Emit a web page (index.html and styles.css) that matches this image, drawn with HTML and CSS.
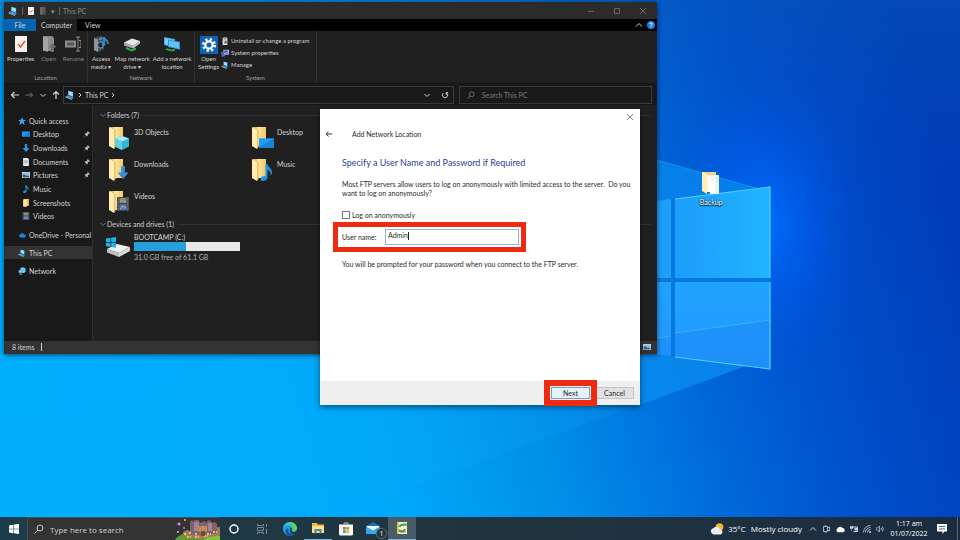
FILE: index.html
```html
<!DOCTYPE html>
<html lang="en">
<head>
  <meta charset="UTF-8">
  <meta name="viewport" content="width=device-width, initial-scale=1.0">
  <title>This PC</title>
  <link rel="stylesheet" href="styles.css">
</head>
<body>

<!-- icon sprite -->
<svg class="sprite" aria-hidden="true">
  <defs>
    <linearGradient id="gFolder" x1="0" y1="0" x2="1" y2="0"><stop offset="0" stop-color="#ffe9a6"/><stop offset="1" stop-color="#f2c968"/></linearGradient>
    <linearGradient id="gEdge" x1="0" y1="0" x2="1" y2="1"><stop offset="0" stop-color="#2fb7e6"/><stop offset="1" stop-color="#1264b8"/></linearGradient>
    <linearGradient id="gEdge2" x1="0" y1="0" x2="1" y2="0"><stop offset="0" stop-color="#2ab4e8"/><stop offset="1" stop-color="#67d85a"/></linearGradient>

    <symbol id="pc" viewBox="0 0 16 16"><path d="M5 1l8 2v8l-8-3z" fill="#5ab9ee"/><path d="M6 2.500l6 1.500v5.500l-6-2.200z" fill="#a6dcf8"/><path d="M1 10l4-1.500 9 3.500-3 3z" fill="#3d93cc"/><path d="M1 10v1.500l10 4.500v-1z" fill="#c9dbe6"/></symbol>
    <symbol id="sheet" viewBox="0 0 16 16"><path d="M2 0h12v16H2z" fill="#f4f2f1"/><path d="M5 8l2.500 3L12 5" fill="none" stroke="#d9623b" stroke-width="1.600"/></symbol>
    <symbol id="open" viewBox="0 0 16 16"><path d="M2 0h9l2 2v13H2z" fill="#8b8b8b"/><path d="M2 0l5 2v14l-5-2z" fill="#a4a4a4"/><path d="M11.500 7l4 4.500h-2.500V16h-3v-4.500H7.500z" fill="#6d6d6d"/></symbol>
    <symbol id="rename" viewBox="0 0 16 16"><path d="M0 4.500h11v7H0z" fill="#8d8d8d"/><path d="M2 6.500h7v3H2z" fill="#555"/><path d="M11 1h4M13 1v14M11 15h4M14 4.500h2v7h-2" fill="none" stroke="#8d8d8d"/></symbol>
    <symbol id="media" viewBox="0 0 16 16"><path d="M1 2l7-2 3 1v12l-6 3-4-2z" fill="#46525f"/><path d="M1 2l4 1.500V16l-4-2z" fill="#8796a5"/><circle cx="7.500" cy="9" r="3" fill="#1d2733" stroke="#9db2c6" stroke-width=".8"/><path d="M11 1v7M11 2c1 2 4 2 4 6" fill="none" stroke="#2c8bd0" stroke-width="2"/><circle cx="10.500" cy="8.500" r="1.800" fill="#2c8bd0"/><path d="M6 3.500l3-1" stroke="#9db2c6"/></symbol>
    <symbol id="netdrive" viewBox="0 0 16 16"><path d="M0 6.500l8-4 8 2.500-7 5z" fill="#e6e8e8"/><path d="M0 6.500v3l9 3v-2.500z" fill="#a9adad"/><path d="M9 10l7-5v2.500l-7 5z" fill="#c4c8c8"/><path d="M2 12l6 2.500 4-2" fill="none" stroke="#35ad45" stroke-width="2"/></symbol>
    <symbol id="netloc" viewBox="0 0 16 16"><path d="M0 1l11 2v9L0 9z" fill="#3ea4dd"/><path d="M1 2.200l9 1.800v6.500L1 8z" fill="#7cd0f4"/><path d="M4 3.500l12 2.200v8L4 11z" fill="#3097d6"/><path d="M5 4.800l10 1.800v5.900L5 10z" fill="#63c3ef"/><path d="M2 13l6 1.500 3-1" fill="none" stroke="#35ad45" stroke-width="1.800"/></symbol>
    <symbol id="gear" viewBox="0 0 18 18"><path d="M0 0h18v18H0z" fill="#0e63b4"/><circle cx="9" cy="9" r="5.500" fill="none" stroke="#fff" stroke-width="3" stroke-dasharray="2.160 2.160"/><circle cx="9" cy="9" r="3.600" fill="none" stroke="#fff" stroke-width="2.200"/></symbol>
    <symbol id="box" viewBox="0 0 10 10"><path d="M2 1h6v9H2z" fill="#e1e1e1"/><path d="M3 0h4v3H3z" fill="#8f8f8f"/><circle cx="6" cy="6.500" r="2" fill="#767676"/></symbol>
    <symbol id="sysprop" viewBox="0 0 10 10"><path d="M3 1h7v6H3z" fill="#b9cdf3"/><path d="M4 2h5v4H4z" fill="#344bb3"/><path d="M0 4l4-1 1 6-4 1z" fill="#5d62c6"/><path d="M4 5l1.500 1.500L8.500 3" fill="none" stroke="#fff"/></symbol>

    <symbol id="star" viewBox="0 0 10 10"><path d="M5 0l1.300 3.300L10 3.700 7.200 6 8.200 10 5 7.800 1.800 10l1-4L0 3.700l3.700-.4z" fill="#3aa7f0"/></symbol>
    <symbol id="desk" viewBox="0 0 16 12"><path d="M0 1h16v10H0z" fill="#1f9df2"/><path d="M0 11L16 1v10z" fill="#1583d8"/></symbol>
    <symbol id="down" viewBox="0 0 12 14"><path d="M4 0h4v7h4l-6 7-6-7h4z" fill="#3a8fdc"/></symbol>
    <symbol id="doc" viewBox="0 0 12 14"><path d="M1 0h8l2 2v12H1z" fill="#e8f0f6"/><path d="M3 4h6M3 6h6M3 8h6M3 10h4" stroke="#7893aa"/></symbol>
    <symbol id="pic" viewBox="0 0 16 12"><path d="M0 0h16v12H0z" fill="#dfeaf4"/><path d="M1 1h14v5H1z" fill="#8bbce4"/><path d="M1 6c4-3 5 2 14 1v4H1z" fill="#365e82"/></symbol>
    <symbol id="note" viewBox="0 0 12 16"><path d="M5 0h2c0 3 5 4 4 9-.3 1-1 2-1.500 2 .8-3-.5-4.500-2.500-5.500V12.500C7 15 4.500 16 2.500 16 .5 16 0 14.500.5 13.300 1 12 3 11 5 11.300z" fill="#1e95e0"/></symbol>
    <symbol id="folderSm" viewBox="0 0 12 14"><path d="M2 0h9v12H2z" fill="#f5cf72"/><path d="M1 1l6 1v12l-6-1z" fill="#ffe6a0"/></symbol>
    <symbol id="film" viewBox="0 0 12 14"><path d="M0 0h12v14H0z" fill="#3d4450"/><path d="M1.200 0v14M10.800 0v14" stroke="#8a93a0" stroke-width="1" stroke-dasharray="1.200 1"/><path d="M2.500 1h7v5h-7z" fill="#7e8a76"/><path d="M2.500 7.500h7V13h-7z" fill="#4f7bd0"/><path d="M3 5l2.500-2L9 5.500M3 12l3-3 3 2" fill="none" stroke="#d9a060"/></symbol>
    <symbol id="cloud" viewBox="0 0 16 10"><path d="M4 10a3.500 3.500 0 0 1 0-6 4.500 4.500 0 0 1 8-.500A3.300 3.300 0 0 1 13 10z" fill="currentColor"/></symbol>
    <symbol id="net" viewBox="0 0 14 14"><circle cx="8.500" cy="5.500" r="5" fill="#58b4ea"/><path d="M5 3c3-2 4 1 7 0M4 7c4-2 5 2 9 0" stroke="#cfeaf9" fill="none"/><path d="M1 5l6 2v5L1 10z" fill="#2f8ed0"/><path d="M2 6l4 1.400v3L2 9z" fill="#a6dcf8"/><path d="M2 12l5 1.500" stroke="#c9dbe6"/></symbol>
    <symbol id="pin" viewBox="0 0 8 8"><path d="M5 0l3 3-1 .6-.7-.2L5 4.800 5 6.500 4 7 2.500 5.500.5 8 0 7.500 2.500 5.500 1 4l.5-1h1.700L4.600 1.700 4.400 1z" fill="#b8c2ca"/></symbol>

    <symbol id="folder" viewBox="0 0 20 24"><path d="M1 1h13v18H6z" fill="#e9ba55"/><path d="M5 1h9v19H5z" fill="url(#gFolder)"/><path d="M0 1l5 2.500V23l-5-3z" fill="#ffedb4"/><path d="M5 3l1.500 1v17L5 23z" fill="#eac36b"/></symbol>
    <symbol id="cube" viewBox="0 0 14 14"><path d="M7 0l7 2.500v8L7 14 0 10.500v-8z" fill="#36b5d3"/><path d="M7 0l7 2.500L7 5.500 0 2.500z" fill="#a5eaf4"/><path d="M0 2.500l7 3V14l-7-3.500z" fill="#5fd0e4"/></symbol>
    <symbol id="drive" viewBox="0 0 24 20"><path d="M1 12l10-5 13 3-11 6z" fill="#f1f1f1"/><path d="M1 12l12 4v4L1 15.500z" fill="#bfbfbf"/><path d="M13 16l11-6v4l-11 6z" fill="#dadada"/><path d="M0 1.500l4.500-.700V5H0zM5.200.700L10 0v5H5.200zM0 5.700h4.500V10L0 9.300zM5.200 5.700H10v5l-4.800-.700z" fill="#1fb4ea"/></symbol>

    <symbol id="chevD" viewBox="0 0 8 8"><path d="M1.500 3L4 5.500 6.500 3" fill="none" stroke="currentColor"/></symbol>
    <symbol id="chevU" viewBox="0 0 8 8"><path d="M1 5.500l3-3 3 3" fill="none" stroke="currentColor"/></symbol>
    <symbol id="chevR" viewBox="0 0 8 8"><path d="M3 2l2 2-2 2" fill="none" stroke="currentColor"/></symbol>
    <symbol id="arrL" viewBox="0 0 10 10"><path d="M9 5H1.500M4.500 2l-3 3 3 3" fill="none" stroke="currentColor" stroke-width="1.200"/></symbol>
    <symbol id="arrR" viewBox="0 0 10 10"><path d="M1.500 5h7M6 2.500L8.500 5 6 7.500" fill="none" stroke="currentColor"/></symbol>
    <symbol id="arrU" viewBox="0 0 10 10"><path d="M5 9V1.500M2 4.500l3-3 3 3" fill="none" stroke="currentColor" stroke-width="1.200"/></symbol>
    <symbol id="reload" viewBox="0 0 10 10"><path d="M3 2.500a3.300 3.300 0 1 0 4 0M6.500 5V2H9" fill="none" stroke="currentColor" stroke-width="1.200"/></symbol>
    <symbol id="lens" viewBox="0 0 10 10"><circle cx="6" cy="4" r="3" fill="none" stroke="currentColor"/><path d="M4 6L.5 9.500" stroke="currentColor"/></symbol>
    <symbol id="cross" viewBox="0 0 8 8"><path d="M1 1l6 6M7 1L1 7" stroke="currentColor"/></symbol>
    <symbol id="win" viewBox="0 0 10 10"><path d="M0 1.400L4.500.700v4H0zM5.100.600L10 0v4.700H5.100zM0 5.300h4.500v4L0 8.600zM5.100 5.300H10V10l-4.900-.700z" fill="#fff"/></symbol>
  </defs>
</svg>

<main class="desktop">
  <svg class="wallpaper" viewBox="0 0 960 540" preserveAspectRatio="none" aria-hidden="true">
    <defs>
      <linearGradient id="sky" x1="0" y1=".55" x2="1" y2=".4">
        <stop offset="0" stop-color="#00aefe"/><stop offset=".35" stop-color="#00a8fa"/><stop offset=".52" stop-color="#008ee8"/>
        <stop offset=".68" stop-color="#006ada"/><stop offset=".82" stop-color="#0050cc"/><stop offset="1" stop-color="#003cb6"/>
      </linearGradient>
      <linearGradient id="topShade" x1="0" y1="0" x2="0" y2="1"><stop offset="0" stop-color="#0a58b4" stop-opacity=".4"/><stop offset=".35" stop-color="#0650c0" stop-opacity="0"/></linearGradient>
      <radialGradient id="glow"><stop offset="0" stop-color="#0070ff" stop-opacity=".9"/><stop offset=".5" stop-color="#0060f8" stop-opacity=".4"/><stop offset="1" stop-color="#0050e0" stop-opacity="0"/></radialGradient>
      <linearGradient id="beam" x1="0" y1="0" x2="1" y2="0"><stop offset="0" stop-color="#12b4ff" stop-opacity=".1"/><stop offset="1" stop-color="#10a0f8" stop-opacity=".22"/></linearGradient>
      <linearGradient id="pane" x1="0" y1="0" x2="1" y2="0"><stop offset="0" stop-color="#1c9dfb"/><stop offset="1" stop-color="#22b4ff"/></linearGradient>
      <linearGradient id="pane2" x1="0" y1="0" x2="0" y2="1"><stop offset="0" stop-color="#1fa3ff"/><stop offset="1" stop-color="#2496ff"/></linearGradient>
    </defs>
    <path d="M0 0h960v540H0z" fill="url(#sky)"/>
    <path d="M0 0h960v540H0z" fill="url(#topShade)"/>
    <ellipse cx="765" cy="225" rx="105" ry="160" fill="url(#glow)"/>
    <path d="M0 425L540 270 770 357 320 520 0 540z" fill="url(#beam)"/>
    <path d="M640 155L770 192v165L640 405z" fill="#0a8cf0" opacity=".7"/>
    <path d="M657 160L770 192" stroke="#27a4f6" opacity=".5"/>
    <path d="M640 203L671 199v79h-31z" fill="#1d9ffa"/>
    <path d="M675 199L770 187v91h-95z" fill="url(#pane)"/>
    <path d="M640 278h130v4H640zM671 199h4v158h-4z" fill="#0878e0"/>
    <path d="M640 282h31v74l-31-4zM675 282h95v87l-95-12z" fill="url(#pane2)"/>
    <path d="M640 341l31-5v20l-31-4zM675 333l95-13v49l-95-12z" fill="#1a84f2" opacity=".4"/>
    <path d="M657 338l14-2M675 333l95-13" stroke="#45bdff" opacity=".7"/>
    <path d="M675 199l95-12v91M770 282v87l-95-12" fill="none" stroke="#4fd2ff" stroke-width="1.200"/>
  </svg>

  <a class="shortcut" href="#backup">
    <svg viewBox="0 0 20 24"><path d="M1 1h14v19H1z" fill="#f0d48b"/><path d="M1 1l5 2v20l-5-3z" fill="#ffeebb"/><path d="M6 4h8v17H6z" fill="#fff6e0"/><path d="M9 4h9v19H9z" fill="#f4f4f2"/><path d="M8 6l6 2v15l-6-3z" fill="#fff"/><path d="M10 8l2 1M15 7h2M15 10h2" stroke="#c7cdd3"/></svg>
    <span>Backup</span>
  </a>

  <section class="explorer" aria-label="This PC">
    <header class="titlebar">
      <svg class="i10"><use href="#pc"/></svg>
      <span class="sep"></span>
      <svg class="i8"><use href="#sheet"/></svg>
      <svg class="i8 dim"><use href="#open"/></svg>
      <span class="tri">▾</span>
      <span class="sep"></span>
      <span class="title">This PC</span>
      <div class="winbuttons">
        <button type="button" aria-label="Minimize"><svg class="i8" viewBox="0 0 8 8"><path d="M1 4.500h6" stroke="currentColor"/></svg></button>
        <button type="button" aria-label="Maximize"><svg class="i8" viewBox="0 0 8 8"><path d="M1.500 1.500h5v5h-5z" fill="none" stroke="currentColor"/></svg></button>
        <button type="button" aria-label="Close"><svg class="i8"><use href="#cross"/></svg></button>
      </div>
    </header>

    <nav class="tabs">
      <button type="button" class="tab file">File</button>
      <button type="button" class="tab active">Computer</button>
      <button type="button" class="tab">View</button>
      <svg class="i8 collapse"><use href="#chevU"/></svg>
      <svg class="i8" viewBox="0 0 10 10"><circle cx="5" cy="5" r="5" fill="#1b80dc"/><path d="M3.500 3.700c0-2 3-2 3 0 0 1.200-1.500 1.200-1.500 2.300M5 7v1.200" fill="none" stroke="#fff" stroke-width="1.200"/></svg>
    </nav>

    <div class="ribbon">
      <div class="group location">
        <div class="tools">
          <button type="button"><svg class="i16"><use href="#sheet"/></svg>Properties</button>
          <button type="button" class="off"><svg class="i16"><use href="#open"/></svg>Open</button>
          <button type="button" class="off"><svg class="i16"><use href="#rename"/></svg>Rename</button>
        </div>
        <p>Location</p>
      </div>
      <div class="group network">
        <div class="tools">
          <button type="button"><svg class="i16"><use href="#media"/></svg>Access<br>media ▾</button>
          <button type="button"><svg class="i16"><use href="#netdrive"/></svg>Map network<br>drive ▾</button>
          <button type="button"><svg class="i16"><use href="#netloc"/></svg>Add a network<br>location</button>
        </div>
        <p>Network</p>
      </div>
      <div class="group system">
        <div class="tools">
          <button type="button" class="settings"><svg class="i18"><use href="#gear"/></svg>Open<br>Settings</button>
          <div class="small-tools">
            <button type="button"><svg class="i8"><use href="#box"/></svg>Uninstall or change a program</button>
            <button type="button"><svg class="i8"><use href="#sysprop"/></svg>System properties</button>
            <button type="button"><svg class="i8"><use href="#pc"/></svg>Manage</button>
          </div>
        </div>
        <p>System</p>
      </div>
    </div>

    <div class="addressrow">
      <div class="history">
        <svg class="i10"><use href="#arrL"/></svg>
        <svg class="i10 dim"><use href="#arrR"/></svg>
        <svg class="i8"><use href="#chevD"/></svg>
        <svg class="i10"><use href="#arrU"/></svg>
      </div>
      <div class="address">
        <svg class="i10"><use href="#pc"/></svg>
        <svg class="i8"><use href="#chevR"/></svg>
        <a href="#thispc">This PC</a>
        <svg class="i8"><use href="#chevR"/></svg>
        <svg class="i8 push"><use href="#chevD"/></svg>
        <svg class="i8"><use href="#reload"/></svg>
      </div>
      <label class="find">
        <svg class="i8"><use href="#lens"/></svg>
        <input type="text" placeholder="Search This PC" aria-label="Search This PC">
      </label>
    </div>

    <div class="body">
      <nav class="sidebar">
        <ul class="quick">
          <li class="root"><a href="#q"><svg class="i8"><use href="#star"/></svg>Quick access</a></li>
          <li><a href="#q"><svg class="i8"><use href="#desk"/></svg>Desktop<svg class="pin"><use href="#pin"/></svg></a></li>
          <li><a href="#q"><svg class="i8"><use href="#down"/></svg>Downloads<svg class="pin"><use href="#pin"/></svg></a></li>
          <li><a href="#q"><svg class="i8"><use href="#doc"/></svg>Documents<svg class="pin"><use href="#pin"/></svg></a></li>
          <li><a href="#q"><svg class="i8"><use href="#pic"/></svg>Pictures<svg class="pin"><use href="#pin"/></svg></a></li>
          <li><a href="#q"><svg class="i8"><use href="#note"/></svg>Music</a></li>
          <li><a href="#q"><svg class="i8"><use href="#folderSm"/></svg>Screenshots</a></li>
          <li><a href="#q"><svg class="i8"><use href="#film"/></svg>Videos</a></li>
        </ul>
        <ul class="places">
          <li><a href="#od"><svg class="i8 blue"><use href="#cloud"/></svg>OneDrive - Personal</a></li>
          <li class="current"><a href="#pc1"><svg class="i8"><use href="#pc"/></svg>This PC</a></li>
          <li><a href="#net1"><svg class="i8"><use href="#net"/></svg>Network</a></li>
        </ul>
      </nav>

      <div class="content">
        <h2><svg class="i8"><use href="#chevD"/></svg>Folders (7)</h2>
        <div class="folders">
          <a href="#f"><svg viewBox="0 0 22 24"><use href="#folder" width="20" height="24"/><use href="#cube" x="6" y="10" width="14" height="14"/></svg>3D Objects</a>
          <a href="#f"><svg viewBox="0 0 22 24"><use href="#folder" width="20" height="24"/><use href="#desk" x="7" y="11" width="15" height="12"/></svg>Desktop</a>
          <a href="#f"><svg viewBox="0 0 22 24"><use href="#folder" width="20" height="24"/><use href="#down" x="8" y="8" width="12" height="13"/></svg>Downloads</a>
          <a href="#f"><svg viewBox="0 0 22 24"><use href="#folder" width="20" height="24"/><use href="#note" x="8" y="6" width="13" height="17"/></svg>Music</a>
          <a href="#f"><svg viewBox="0 0 22 24"><use href="#folder" width="20" height="24"/><use href="#film" x="8" y="7" width="12" height="14"/></svg>Videos</a>
        </div>
        <h2><svg class="i8"><use href="#chevD"/></svg>Devices and drives (1)</h2>
        <div class="drive">
          <svg class="driveicon"><use href="#drive"/></svg>
          <div class="driveinfo">
            <span>BOOTCAMP (C:)</span>
            <div class="usage"><div class="used" style="width:49%"></div></div>
            <span class="free">31.0 GB free of 61.1 GB</span>
          </div>
        </div>
      </div>
    </div>

    <footer class="status">
      <span>8 items</span>
      <svg class="view"><use href="#pic"/></svg>
    </footer>
  </section>

  <form class="dialog" aria-label="Add Network Location">
    <div class="dialog-top">
      <button type="button" class="close" aria-label="Close"><svg class="i8"><use href="#cross"/></svg></button>
    </div>
    <div class="dialog-title">
      <button type="button" class="back" aria-label="Back"><svg class="i8"><use href="#arrL"/></svg></button>
      <span>Add Network Location</span>
    </div>
    <div class="dialog-body">
      <h1>Specify a User Name and Password if Required</h1>
      <p>Most FTP servers allow users to log on anonymously with limited access to the server.&nbsp; Do you want to log on anonymously?</p>
      <div class="check">
        <input type="checkbox" id="anon">
        <label for="anon">Log on anonymously</label>
      </div>
      <div class="userrow">
        <label for="user">User name:</label>
        <input type="text" id="user" value="Admin">
      </div>
      <p>You will be prompted for your password when you connect to the FTP server.</p>
    </div>
    <div class="dialog-foot">
      <button type="button" class="next">Next</button>
      <button type="button">Cancel</button>
    </div>
  </form>
</main>

<footer class="taskbar">
  <button type="button" class="start" aria-label="Start"><svg class="i10"><use href="#win"/></svg></button>
  <label class="search">
    <svg class="i10"><use href="#lens"/></svg>
    <input type="text" placeholder="Type here to search" aria-label="Type here to search">
    <svg class="castle" viewBox="0 0 45 22" aria-hidden="true">
      <path d="M0 22c3-6 12-8 20-6s18 0 25 0v6z" fill="#5f9c35"/>
      <path d="M8 14l4-2 3 1 6-3 24-1v9l-20 3-17-3z" fill="#a87c52"/>
      <path d="M15 12V4l2-2 2 2v-2h5l1 3 4-2 3 2V3l3-1 2 3 3-1 2 2v10l-27 1z" fill="#7c6272"/>
      <path d="M19 4h5v9h-5zM33 5h4v8h-4z" fill="#a4848a"/>
      <path d="M9 16h3M14 15h3M20 16h3M26 15h3M32 16h4M38 14h4M12 19h4M20 19h4M29 18h4" stroke="#e9bd78" stroke-width="2" stroke-dasharray="2 1"/>
      <path d="M24 8h8v6h-8z" fill="#c58a54"/>
      <path d="M26 13h4v5h-4z" fill="#704a3d"/>
      <path d="M28 22c4-3 10-4 17-4v4z" fill="#82c63e"/>
      <path d="M2 6l2-2 2 2-2 2z" fill="#c67be8"/><circle cx="10" cy="2" r="1" fill="#f2ce3c"/><circle cx="3" cy="14" r="1" fill="#b7cbe6"/><circle cx="9" cy="10" r="1" fill="#c67be8"/>
    </svg>
  </label>
  <nav class="apps">
    <button type="button" aria-label="Cortana"><svg class="i14" viewBox="0 0 14 14"><circle cx="7" cy="7" r="4" fill="none" stroke="#fff" stroke-width="1.500"/></svg></button>
    <button type="button" aria-label="Task View"><svg class="i14" viewBox="0 0 14 14"><path d="M2.500 2v1.500h6V2M2.500 12v-1.500h6V12M2.500 5.500h6v3h-6zM11.500 2v3M11.500 7v5" fill="none" stroke="#8696a0" stroke-width=".9"/></svg></button>
    <button type="button" aria-label="Edge"><svg class="i14" viewBox="0 0 14 14"><circle cx="7" cy="7" r="7" fill="url(#gEdge)"/><path d="M0 6.500C.5 2.500 3.500 0 7 0c4 0 7 3 7 6 0 2-1.500 3.500-3.500 3.500-1.500 0-2-.500-2-1 0-.800.800-1 .8-2.300C9.300 4.500 7.500 3.500 5.300 3.500 2.800 3.500.8 5 0 6.500z" fill="url(#gEdge2)"/><path d="M5 6c-1 3 .5 6.500 5 6.500 1.200 0 2-.3 2.800-.8C10.500 14.500 4.500 14.500 3 10.500 2.300 8.500 3.500 6.700 5 6z" fill="#0e4f9b"/><path d="M8.500 8.500c0 .8 1 1.500 2.500 1.500 1 0 2-.300 3-1.500-.2 1.500-.8 2.500-1.700 3.300-3 .8-5.800-.8-5.300-4.300.2-.8.800-1.500 1.500-1.500.6.600.4 1.500 0 2.500z" fill="#203640"/></svg></button>
    <button type="button" class="running" aria-label="File Explorer"><svg class="i14" viewBox="0 0 14 14"><path d="M1 2h5l1 1.500h6V12H1z" fill="#e9b949"/><path d="M1 5h12v7H1z" fill="#ffdf83"/><path d="M3.500 8h7v4.500h-2V10h-3v2.500h-2z" fill="#4b83ad"/></svg></button>
    <button type="button" aria-label="Store"><svg class="i14" viewBox="0 0 14 14"><path d="M5 2.500V1h4v1.500" fill="none" stroke="#b8c9d3"/><path d="M0 2.500h14V12q0 1.500-1.500 1.500h-11Q0 13.500 0 12z" fill="#f7f7f7"/><path d="M4 5h2.700v2.700H4z" fill="#e9572b"/><path d="M7.300 5H10v2.700H7.300z" fill="#7eb92b"/><path d="M4 8.300h2.700V11H4z" fill="#2a9ee4"/><path d="M7.300 8.300H10V11H7.300z" fill="#f7b51d"/></svg></button>
    <button type="button" aria-label="Mail"><svg class="mail" viewBox="0 0 18 14"><path d="M1 4l7-4 7 4v8H1z" fill="#1470c0"/><path d="M2 4h12v5H2z" fill="#eef7fd"/><path d="M1 4.500l7 4 7-4V12H1z" fill="#37a5e8"/></svg><span class="badge">1</span></button>
    <button type="button" class="running selected" aria-label="Add Network Location"><svg class="i14" viewBox="0 0 14 14"><path d="M2 1h10v12H2z" fill="#f5f3d8"/><path d="M2 1h2v12H2z" fill="#dcc56b"/><path d="M4.500 6a3 3 0 0 1 5-1.500M10 8a3 3 0 0 1-5 1.500" fill="none" stroke="#2b9a3b" stroke-width="1.800"/><path d="M8.500 2.500h3v3zM3.500 11l1-3 2 2.500z" fill="#2b9a3b"/><path d="M5 11h6" stroke="#c85e35"/></svg></button>
  </nav>
  <div class="tray">
    <svg class="weather" viewBox="0 0 14 12"><circle cx="9.500" cy="4" r="3.800" fill="#f5b932"/><path d="M3.500 11.500a3.200 3.200 0 0 1 0-6.300 3.800 3.800 0 0 1 6.500 1 2.700 2.700 0 0 1 .5 5.300z" fill="#e8eef4"/></svg>
    <span class="temp">35°C</span>
    <span class="sky">Mostly cloudy</span>
    <div class="trayicons">
      <svg class="i8"><use href="#chevU"/></svg>
      <svg class="i8" viewBox="0 0 8 8"><path d="M1.500 1.500h4v5h-4zM2.500 0h2M2.500 8h2M5.500 3l2-1v4l-2-1" fill="none" stroke="currentColor" stroke-width=".8"/></svg>
      <svg class="i10 white"><use href="#cloud"/></svg>
      <svg class="i8" viewBox="0 0 8 8"><path d="M2.500 2h5v4.500h-4" fill="none" stroke="currentColor"/><path d="M4.500 3H7v2.500H4.500z" fill="currentColor"/><path d="M0 1.500h3v2H0zM1.500 3.500V6" fill="currentColor" stroke="currentColor" stroke-width=".5"/></svg>
      <svg class="i8" viewBox="0 0 8 8"><path d="M.5 7.500a7 7 0 0 1 7-7M2.500 7.500a5 5 0 0 1 5-5M4.500 7.500a3 3 0 0 1 3-3" fill="none" stroke="currentColor" stroke-width=".8"/><circle cx="7" cy="7" r="1" fill="currentColor"/></svg>
      <svg class="i8" viewBox="0 0 8 8"><path d="M0 3h1.500L3.500 1v6L1.500 5H0z" fill="none" stroke="currentColor" stroke-width=".7"/><path d="M5 3q1 1 0 2M6.300 1.500q2 2.500 0 5" fill="none" stroke="currentColor" stroke-width=".8"/></svg>
    </div>
    <div class="clock"><span>1:17 am</span><span>01/07/2022</span></div>
    <svg class="i10" viewBox="0 0 10 10"><path d="M0 0h10v7.500H7.500L5.500 10V7.500H0z" fill="#fff"/><path d="M2 2.500h6M2 5h6" stroke="#25364a" stroke-width=".8"/></svg>
  </div>
</footer>
</body>
</html>
```

FILE: styles.css
```css
:root {
  --font: Lato, "Open Sans", sans-serif;
  --font-bar: "Open Sans", "Noto Sans", sans-serif;
  --text: 7px;
  --small: 6px;
  --dark: #202020;
  --darker: #191919;
  --line: #3a3a3a;
  --light: #d4d4d4;
  --mark: #ee2b10;
}

* {
  box-sizing: border-box;
}

body {
  margin: 0;
  height: 100vh;
  display: flex;
  flex-direction: column;
  overflow: hidden;
  font-family: var(--font);
  font-size: var(--text);
  line-height: 8px;
  color: var(--light);
}

h1, h2, p, ul {
  margin: 0;
  padding: 0;
  font-weight: normal;
}

ul {
  list-style: none;
}

a {
  color: inherit;
  text-decoration: none;
}

button, input {
  font: inherit;
  color: inherit;
  background: none;
  border: 0;
  padding: 0;
  margin: 0;
}

button {
  white-space: nowrap;
}

svg {
  flex: none;
  display: block;
}

.sprite {
  position: absolute;
  width: 0;
  height: 0;
}

.i8 { width: 8px; height: 8px; }
.i10 { width: 10px; height: 10px; }
.i14 { width: 14px; height: 14px; }
.i16 { width: 16px; height: 16px; }
.i18 { width: 18px; height: 18px; }

.dim { opacity: 0.5; }
.blue { color: #1488dc; }
.white { color: #fff; }

/* desktop */
.desktop {
  flex: 1;
  min-height: 0;
  position: relative;
}

.wallpaper {
  position: absolute;
  inset: 0;
  width: 100%;
  height: 100vh;
}

.shortcut {
  position: absolute;
  left: 72%;
  top: 171px;
  width: 40px;
  display: flex;
  flex-direction: column;
  align-items: center;
  gap: 3px;
  color: #fff;
  text-shadow: 0 1px 1px #000, 0 0 2px #000;
}

.shortcut svg {
  width: 20px;
  height: 24px;
}

/* explorer window */
.explorer {
  position: absolute;
  left: 4px;
  top: 2px;
  width: 68%;
  height: 68%;
  display: flex;
  flex-direction: column;
  background: var(--dark);
  box-shadow: 0 1px 5px rgba(0, 0, 0, 0.6);
}

.titlebar {
  display: flex;
  align-items: center;
  height: 17px;
  padding-left: 4px;
  gap: 4px;
  background: #2b2b2b;
  color: #8d8d8d;
}

.titlebar .sep {
  width: 1px;
  height: 8px;
  background: #666;
}

.titlebar .title {
  margin-left: -1px;
}

.winbuttons {
  display: flex;
  margin-left: auto;
  margin-right: 1px;
  color: #666;
}

.winbuttons button {
  width: 26px;
  display: flex;
  justify-content: center;
}

.tabs {
  display: flex;
  align-items: center;
  height: 12px;
  padding-right: 2px;
  gap: 4px;
  background: #000;
}

.tab {
  height: 12px;
  padding: 0 4px;
}

.tab.file {
  width: 32px;
  margin-right: -4px;
  background: #0563b1;
}

.tab.active {
  width: 41px;
  background: var(--dark);
}

.collapse {
  margin-left: auto;
}

.ribbon {
  display: flex;
  height: 53px;
  border-bottom: 1px solid #151515;
  font-size: var(--small);
}

.group {
  display: flex;
  flex-direction: column;
  justify-content: space-between;
  border-right: 1px solid #333;
  padding: 5px 1px 1px;
}

.group p {
  text-align: center;
  color: #a0a0a0;
}

.location { width: 84px; }
.network { width: 107px; }
.system { width: 122px; }

.tools {
  display: flex;
}

.location .tools, .network .tools {
  justify-content: space-between;
}

.tools > button {
  display: flex;
  flex-direction: column;
  align-items: center;
  gap: 3px;
  min-width: 24px;
  padding: 0 2px;
}

.tools > .settings {
  gap: 1px;
}

.off {
  color: #858585;
}

.small-tools {
  display: flex;
  flex-direction: column;
  gap: 4px;
  padding-top: 1px;
}

.small-tools button {
  display: flex;
  align-items: center;
  gap: 2px;
}

.addressrow {
  display: flex;
  align-items: center;
  height: 21px;
  padding-right: 5px;
  background: var(--darker);
}

.history {
  display: flex;
  align-items: center;
  justify-content: space-between;
  width: 59px;
  padding: 0 2px 0 6px;
}

.address, .find {
  display: flex;
  align-items: center;
  height: 18px;
  border: 1px solid var(--line);
}

.address {
  flex: 2;
  margin-right: 5px;
  padding: 0 4px 0 1px;
  gap: 1px;
}

.push {
  margin-left: auto;
  margin-right: 9px;
}

.find {
  flex: 1;
  max-width: 193px;
  padding-left: 7px;
  gap: 7px;
  color: #7c7c7c;
}

input::placeholder {
  color: inherit;
  opacity: 1;
}

.find input {
  flex: 1;
  min-width: 0;
}

.body {
  flex: 1;
  min-height: 0;
  display: flex;
}

.sidebar {
  width: 89px;
  padding-top: 9px;
  background: var(--darker);
  border-right: 1px solid #2e2e2e;
}

.quick {
  display: flex;
  flex-direction: column;
  height: 109px;
}

.quick li {
  flex: 1;
  display: flex;
  padding-left: 18px;
}

.quick li.root {
  padding-left: 14px;
}

.sidebar a {
  flex: 1;
  display: flex;
  align-items: center;
  gap: 3px;
  white-space: nowrap;
}

.pin {
  width: 6px;
  height: 6px;
  margin-left: auto;
  margin-right: 2px;
}

.places {
  display: flex;
  flex-direction: column;
  gap: 5px;
  padding-top: 5px;
}

.places li {
  display: flex;
  height: 13px;
  padding-left: 14px;
}

.places .current {
  background: #333;
}

.content {
  flex: 1;
  padding: 4px 6px;
}

.content h2 {
  display: flex;
  align-items: center;
  height: 12px;
  font-size: var(--text);
  color: #cfcfcf;
}

.content h2 svg {
  color: #777;
}

.content h2::after {
  content: "";
  flex: 1;
  height: 1px;
  margin-left: 4px;
  background: #303030;
}

.folders {
  display: grid;
  grid-template-columns: repeat(2, 143px);
  grid-auto-rows: 24px;
  row-gap: 8px;
  padding: 5px 10px 4px;
}

.folders a {
  display: flex;
  gap: 3px;
  line-height: 12px;
}

.folders svg {
  width: 22px;
  height: 24px;
}

.drive {
  display: flex;
  align-items: center;
  gap: 4px;
  padding: 3px 7px;
}

.driveicon {
  width: 24px;
  height: 20px;
}

.driveinfo {
  display: flex;
  flex-direction: column;
  gap: 1px;
}

.usage {
  width: 106px;
  height: 9px;
  background: #e8e8e8;
}

.used {
  height: 100%;
  background: #26a0da;
}

.free {
  color: #b0b0b0;
  padding-top: 1px;
}

.status {
  display: flex;
  align-items: center;
  justify-content: space-between;
  height: 13px;
  padding: 0 6px 0 8px;
  background: #333;
}

.status span {
  padding-right: 6px;
  border-right: 1px solid #ccc;
}

.status .view {
  width: 8px;
  height: 6px;
}

/* wizard dialog */
.dialog {
  position: absolute;
  left: 33.3333%;
  top: 109px;
  width: 33.3333%;
  min-height: 296px;
  display: flex;
  flex-direction: column;
  background: #fff;
  color: #2a2a2a;
  box-shadow: 0 2px 6px rgba(0, 0, 0, 0.5);
}

.dialog-top {
  display: flex;
  justify-content: flex-end;
  height: 16px;
  padding: 4px 6px;
  color: #888;
}

.dialog-title {
  display: flex;
  align-items: center;
  height: 18px;
  padding-left: 5px;
  gap: 19px;
}

.dialog-body {
  flex: 1;
  padding: 14px 6px 0 22px;
}

.dialog-body h1 {
  font-size: 9px;
  line-height: 12px;
  margin-bottom: 11px;
  color: #1f4290;
}

.dialog-body p {
  line-height: 9px;
}

.check {
  display: flex;
  align-items: center;
  gap: 2px;
  margin-top: 12px;
  height: 9px;
}

.check input {
  appearance: none;
  width: 8px;
  height: 8px;
  border: 1px solid #777;
}

.userrow {
  display: flex;
  align-items: center;
  width: 193px;
  height: 30px;
  margin: 3px 0 8px -9px;
  padding-left: 4px;
  border: 5px solid var(--mark);
}

.userrow label {
  width: 43px;
}

/* the gradient is the text cursor after the value */
.userrow input {
  flex: 1;
  height: 16px;
  margin-right: 2px;
  padding: 0 2px 4px;
  border: 1px solid #8db4d8;
  background: linear-gradient(#222, #222) 22px 2px / 1px 8px no-repeat;
}

.dialog-foot {
  display: flex;
  justify-content: flex-end;
  align-items: center;
  height: 24px;
  padding-right: 6px;
  gap: 5px;
  background: #efefef;
}

.dialog-foot button {
  width: 39px;
  height: 12px;
  background: #e1e1e1;
  border: 1px solid #c4c4c4;
}

.dialog-foot .next {
  position: relative;
  background: #e5f1fb;
  border-color: #7d9fc4;
  outline: 6px solid var(--mark);
  outline-offset: 1px;
}

/* taskbar */
.taskbar {
  position: relative;
  display: flex;
  height: 23px;
  background: linear-gradient(90deg, #1d3c49, #20353f 45%, #1b2c40);
  color: #fff;
  font-family: var(--font-bar);
}

.start {
  width: 27px;
  display: flex;
  align-items: center;
  justify-content: center;
}

.search {
  width: 193px;
  display: flex;
  align-items: center;
  padding-left: 6px;
  gap: 6px;
  background: #333;
  border: 1px solid #46505a;
  border-width: 1px 0 0 1px;
  color: #d0d0d0;
  font-size: 8px;
}

.search input {
  flex: 1;
  min-width: 0;
}

.castle {
  width: 45px;
  height: 22px;
}

.apps {
  display: flex;
}

.apps button {
  position: relative;
  width: 28px;
  display: flex;
  align-items: center;
  justify-content: center;
}

.apps .running {
  border-bottom: 1px solid #76b9ed;
}

.apps .selected {
  background: #4a5c66;
}

.mail {
  width: 18px;
  height: 14px;
}

.badge {
  position: absolute;
  right: 2px;
  bottom: 2px;
  width: 9px;
  height: 9px;
  line-height: 9px;
  border-radius: 50%;
  background: #24323b;
  box-shadow: 0 0 0 1px #5d6970;
}

.tray {
  display: flex;
  align-items: center;
  margin-left: auto;
  margin-right: 2px;
  padding-right: 10px;
  border-right: 1px solid #5a6878;
  font-size: 8px;
}

.weather {
  width: 14px;
  height: 12px;
  margin-right: 4px;
}

.sky {
  margin-left: 5px;
}

.trayicons {
  display: flex;
  align-items: center;
  gap: 5px;
  margin-left: 7px;
  color: #cbd2d8;
}

.clock {
  display: flex;
  flex-direction: column;
  align-items: center;
  gap: 2px;
  width: 46px;
  margin: 0 5px 0 2px;
  font-size: 7px;
}
```
